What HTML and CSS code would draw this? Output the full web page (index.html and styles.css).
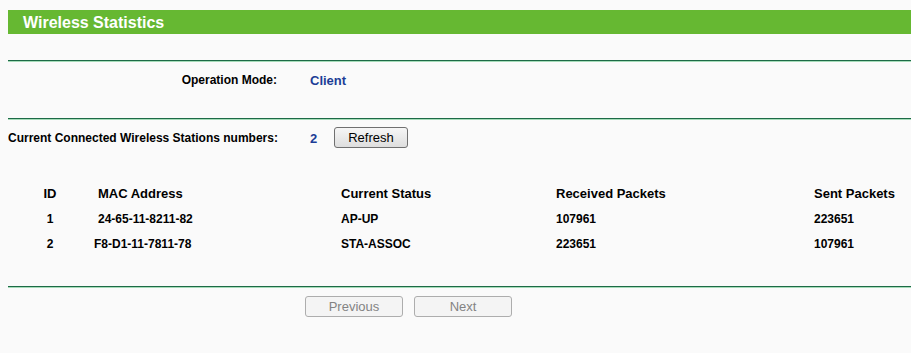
FILE: index.html
```html
<!DOCTYPE html>
<html lang="en">
<head>
    <meta charset="UTF-8">
    <title>Wireless Statistics</title>
    <link rel="stylesheet" href="styles.css">
</head>
<body>
    <div class="title-bar">Wireless Statistics</div>

    <div class="rule first"></div>

    <div class="row mode-row">
        <div class="label">Operation Mode:</div>
        <div class="value">Client</div>
    </div>

    <div class="rule second"></div>

    <div class="row count-row">
        <div class="label">Current Connected Wireless Stations numbers:</div>
        <div class="value">2</div>
        <button class="button">Refresh</button>
    </div>

    <table class="stations">
        <thead>
            <tr>
                <th class="col-id">ID</th>
                <th class="col-mac">MAC Address</th>
                <th class="col-status">Current Status</th>
                <th class="col-rx">Received Packets</th>
                <th class="col-tx">Sent Packets</th>
            </tr>
        </thead>
        <tbody>
            <tr>
                <td class="col-id">1</td>
                <td class="col-mac">24-65-11-8211-82</td>
                <td class="col-status">AP-UP</td>
                <td class="col-rx">107961</td>
                <td class="col-tx">223651</td>
            </tr>
            <tr>
                <td class="col-id">2</td>
                <td class="col-mac mac-shift">F8-D1-11-7811-78</td>
                <td class="col-status">STA-ASSOC</td>
                <td class="col-rx">223651</td>
                <td class="col-tx">107961</td>
            </tr>
        </tbody>
    </table>

    <div class="rule third"></div>

    <div class="pager">
        <button class="button disabled" disabled>Previous</button>
        <button class="button disabled" disabled>Next</button>
    </div>
</body>
</html>
```

FILE: styles.css
```css
body {
    font-family: "Liberation Sans", Arial, sans-serif;
    background-color: #fafafa;
    color: #000;
    margin: 10px 0 0 8px;
    padding: 0;
    font-size: 12px;
}

.title-bar {
    background-color: #66b832;
    color: #fff;
    font-size: 16px;
    font-weight: bold;
    height: 24px;
    line-height: 25px;
    padding-left: 15px;
}

.rule {
    height: 1px;
    background-color: #1d6a46;
    border-bottom: 1px solid #a5dcb9;
}

.rule.first {
    margin-top: 26px;
}

.rule.second {
    margin-top: 20px;
}

.rule.third {
    margin-top: 30px;
}

.row {
    display: flex;
    align-items: center;
    font-weight: bold;
}

.mode-row {
    height: 36px;
}

.count-row {
    height: 36px;
}

.row .label {
    flex: none;
    width: 269px;
    text-align: right;
    white-space: nowrap;
}

.row .value {
    flex: none;
    width: 24px;
    margin-left: 33px;
    color: #1c3d96;
    font-size: 13px;
}

.mode-row .value {
    width: auto;
}

.button {
    font-family: "Liberation Sans", Arial, sans-serif;
    font-size: 13px;
    height: 21px;
    padding: 0;
    color: #000;
    background: linear-gradient(#f6f6f6, #dedede);
    border: 1px solid #707070;
    border-radius: 3px;
}

.count-row .button {
    width: 74px;
    margin-top: -2px;
}

.button.disabled {
    color: #838383;
    background: #f4f4f4;
    border-color: #adadad;
}

.stations {
    border-collapse: collapse;
    table-layout: fixed;
    margin-top: 24px;
    width: 903px;
    font-weight: bold;
}

.stations th,
.stations td {
    box-sizing: border-box;
    padding: 0;
    text-align: left;
    font-size: 12px;
    white-space: nowrap;
}

.stations th {
    font-size: 13px;
    height: 26px;
}

.stations td {
    height: 25px;
}

.stations .col-id {
    width: 84px;
    text-align: center;
}

.stations .col-mac {
    width: 243px;
    padding-left: 6px;
}

.stations td.mac-shift {
    padding-left: 2px;
}

.stations .col-status {
    width: 215px;
    padding-left: 6px;
}

.stations .col-rx {
    width: 258px;
    padding-left: 6px;
}

.stations .col-tx {
    width: 103px;
    padding-left: 6px;
}

.pager {
    display: flex;
    gap: 11px;
    padding-left: 297px;
    margin-top: 8px;
}

.pager .button {
    width: 98px;
}
```
